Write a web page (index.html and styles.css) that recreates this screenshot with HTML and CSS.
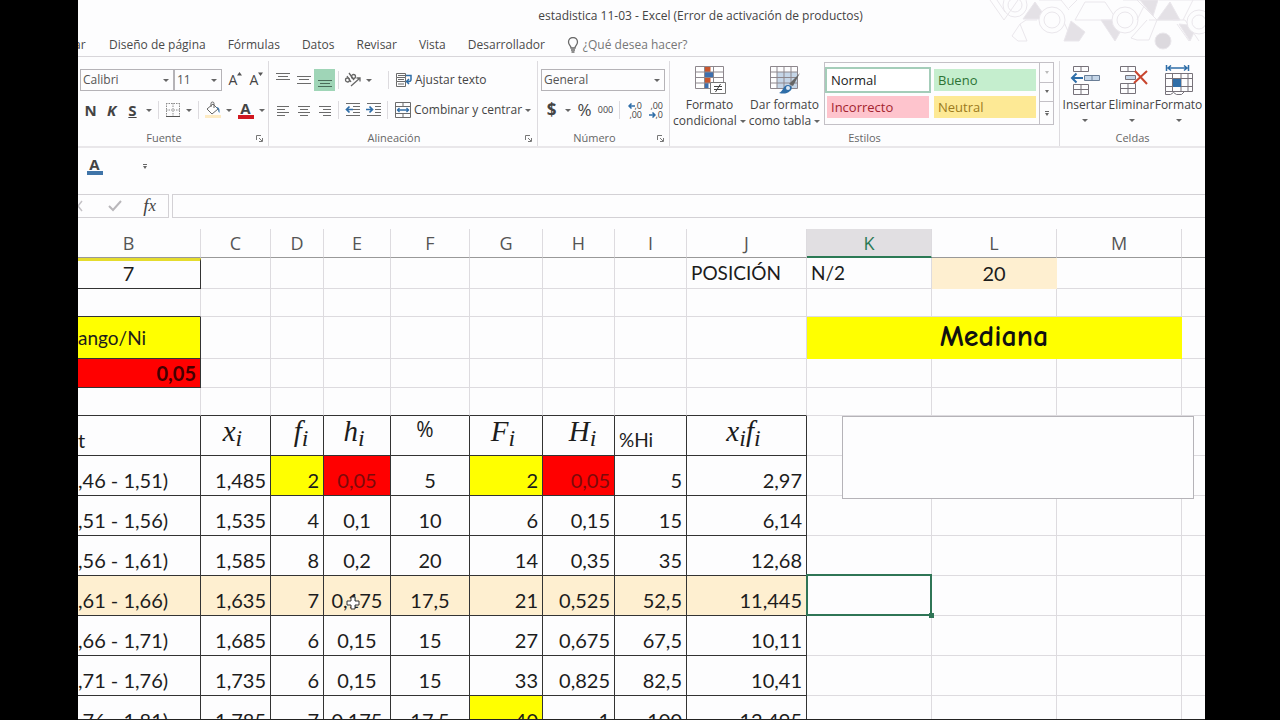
FILE: index.html
```html
<!DOCTYPE html>
<html lang="es">
<head>
<meta charset="utf-8">
<title>estadistica 11-03 - Excel</title>
<link rel="stylesheet" href="styles.css">
</head>
<body>
<div class="app">
  <header class="titlebar">
    <h1 class="title">estadistica 11-03 - Excel (Error de activación de productos)</h1>
    <svg class="pattern" width="220" height="50" viewBox="0 0 220 50" fill="none" stroke="#eae7ec" stroke-width="1">
      <path d="M5 0l14 20L33 0M12 0l8 12"/>
      <circle cx="30" cy="5" r="12"/><circle cx="30" cy="5" r="7"/>
      <path d="M38 19L50 2l12 17z" fill="#e4e1e6"/>
      <path d="M54 0h22l8 10M35 24l6-4h11M35 24l-8 12 6 5h9l-7-17M78 20l8 18"/>
      <circle cx="67" cy="20" r="13" fill="#fdfdfe"/><circle cx="67" cy="20" r="8"/>
      <path d="M86 21l14 11-6 9H79z" fill="#e4e1e6"/>
      <path d="M90 20L100 2h20l12 18H90M84 8l8-8"/>
      <path d="M116 20l14 21 12-21z" fill="#e4e1e6"/>
      <circle cx="140" cy="20" r="13" fill="#fdfdfe"/><circle cx="140" cy="20" r="8"/>
      <path d="M138 0h24l-10 20M152 0l20 20-8 20h-12l-6-2 16-18M164 20h30"/>
      <path d="M155 0h18l-5 16z" fill="#e4e1e6"/>
      <path d="M172 20l13-18 10 18z" fill="#e4e1e6"/>
      <circle cx="178" cy="41" r="8" fill="#dcd9de"/>
      <path d="M188 20h12l14 21M174 0h46M198 20l10-20M192 24l12 17"/>
      <path d="M194 24l11 17 7-15z" fill="#e4e1e6"/>
      <circle cx="214" cy="22" r="12" fill="#fdfdfe"/><circle cx="214" cy="22" r="7"/>
    </svg>
  </header>

  <nav class="tabs">
    <a class="tab tab-cut" href="#">ar</a>
    <a class="tab" href="#">Diseño de página</a>
    <a class="tab" href="#">Fórmulas</a>
    <a class="tab" href="#">Datos</a>
    <a class="tab" href="#">Revisar</a>
    <a class="tab" href="#">Vista</a>
    <a class="tab" href="#">Desarrollador</a>
    <a class="tab tell" href="#">
      <svg width="12" height="16" viewBox="0 0 12 16" fill="none" stroke="#6a6a6a" stroke-width="1.3"><path d="M4 11C4 8.500 1.500 8 1.500 5a4.500 4.500 0 0 1 9 0c0 3-2.500 3.500-2.500 6zM4 13h4M4.500 15h3"/></svg>
      ¿Qué desea hacer?
    </a>
  </nav>

  <section class="ribbon">
    <div class="group g-font">
      <div class="body">
        <div class="line">
          <label class="combo c-font"><select aria-label="Fuente"><option>Calibri</option></select><i class="arr"></i></label>
          <label class="combo c-size"><select aria-label="Tamaño de fuente"><option>11</option></select><i class="arr"></i></label>
          <button class="ib grow" aria-label="Aumentar tamaño de fuente">A<svg width="5" height="4" viewBox="0 0 5 4"><path d="M0 3.500L2.500 0 5 3.500z" fill="#555"/></svg></button>
          <button class="ib grow" aria-label="Disminuir tamaño de fuente">A<svg width="5" height="4" viewBox="0 0 5 4"><path d="M0 .5h5L2.500 4z" fill="#555"/></svg></button>
        </div>
        <div class="line">
          <button class="ib"><b>N</b></button>
          <button class="ib"><b><em>K</em></b></button>
          <button class="ib"><b><u>S</u></b></button>
          <i class="arr"></i><i class="sep"></i>
          <button class="ib" aria-label="Bordes"><svg width="16" height="16" viewBox="0 0 16 16" fill="none" stroke="#8d8d8d"><path d="M1.500 1v13M14.500 1v13M8 1v13M1 1.500h14M1 8h14" stroke-dasharray="1.500 1"/><path d="M1 14.500h14" stroke="#555"/></svg></button>
          <i class="arr"></i><i class="sep"></i>
          <button class="ib" aria-label="Color de relleno"><svg width="18" height="18" viewBox="0 0 18 18" fill="none"><path d="M3 8l6-5 5 5-6 5z" stroke="#666" fill="#fff"/><path d="M7 6V2.500a1.500 1.500 0 0 1 3 0V7" stroke="#666"/><path d="M12 6c3 0 4 2 3.500 6-1-1-1.500-2-1.500-4z" fill="#3d78ad"/><path d="M1 14h16v3H1z" fill="#fdebc4"/></svg></button>
          <i class="arr"></i>
          <button class="ib colorA" aria-label="Color de fuente"><b>A</b></button>
          <i class="arr"></i>
        </div>
      </div>
      <footer class="gl"><span>Fuente</span><svg class="launch" width="7" height="7" viewBox="0 0 7 7" fill="none" stroke="#777"><path d="M.5 5V.5H5M3 3l3 3M6.500 3v3.500H3"/></svg></footer>
    </div>

    <div class="group g-align">
      <div class="body">
        <div class="line">
          <button class="ib" aria-label="Alinear arriba"><svg width="16" height="18" viewBox="0 0 16 18" stroke="#6b6b6b"><path d="M1 2.500h14M3 5.500h10M1 8.500h14"/></svg></button>
          <button class="ib" aria-label="Alinear al medio"><svg width="16" height="18" viewBox="0 0 16 18" stroke="#6b6b6b"><path d="M1 5.500h14M3 8.500h10M1 12.500h14"/></svg></button>
          <button class="ib on" aria-label="Alinear abajo"><svg width="16" height="18" viewBox="0 0 16 18" stroke="#4a6b59"><path d="M1 9.500h14M3 12.500h10M1 15.500h14"/></svg></button>
          <i class="sep"></i>
          <button class="ib" aria-label="Orientación"><svg width="18" height="16" viewBox="0 0 18 16" fill="none" stroke="#666" stroke-width="1.300"><path d="M7 14l9-8M12.500 6H16v3.500"/><circle cx="3.500" cy="8" r="2"/><path d="M3 4l4 6M5 1l5 7"/><circle cx="9.500" cy="4.500" r="2"/></svg></button>
          <i class="arr wide"></i><i class="sep"></i>
          <button class="tb"><svg width="18" height="16" viewBox="0 0 18 16" fill="none" stroke="#6b6b6b"><path d="M1.500 1.500h9v4h-9zM1.500 5.500v4h9v-4M1.500 9.500v5h9v-5M3 3.500h10M3 7.500h6M3 12h6"/><path d="M11 3.500h5v4c0 2-1 2-4 2M14 7l-2.500 2.500L14 12" stroke="#2f6ea8" stroke-width="1.500"/></svg>Ajustar texto</button>
        </div>
        <div class="line">
          <button class="ib" aria-label="Alinear a la izquierda"><svg width="16" height="16" viewBox="0 0 16 16" stroke="#6b6b6b"><path d="M2 4.500h12M2 7.500h8M2 10.500h12M2 13.500h8"/></svg></button>
          <button class="ib" aria-label="Centrar"><svg width="16" height="16" viewBox="0 0 16 16" stroke="#6b6b6b"><path d="M2 4.500h12M4 7.500h8M2 10.500h12M4 13.500h8"/></svg></button>
          <button class="ib" aria-label="Alinear a la derecha"><svg width="16" height="16" viewBox="0 0 16 16" stroke="#6b6b6b"><path d="M2 4.500h12M6 7.500h8M2 10.500h12M6 13.500h8"/></svg></button>
          <i class="sep"></i>
          <button class="ib" aria-label="Disminuir sangría"><svg width="16" height="16" viewBox="0 0 16 16" stroke="#6b6b6b" fill="none"><path d="M1 1.500h14M8 4.500h7M8 7.500h7M8 10.500h7M1 13.500h14"/><path d="M8 7.500H2M4.500 4.500l-3 3 3 3" stroke="#2f6ea8" stroke-width="1.700"/></svg></button>
          <button class="ib" aria-label="Aumentar sangría"><svg width="16" height="16" viewBox="0 0 16 16" stroke="#6b6b6b" fill="none"><path d="M1 1.500h14M9 4.500h6M9 7.500h6M9 10.500h6M1 13.500h14"/><path d="M0 7.500h6M3.500 4.500l3 3-3 3" stroke="#2f6ea8" stroke-width="1.700"/></svg></button>
          <i class="sep"></i>
          <button class="tb"><svg width="18" height="16" viewBox="0 0 18 16" fill="none" stroke="#6b6b6b"><path d="M1.500.5h15v15h-15zM1.500 4.500h15M1.500 11.500h15M9 .5v4M9 11.500v4"/><path d="M3 8h12M5.500 6l-2 2 2 2M12.500 6l2 2-2 2" stroke="#2f6ea8" stroke-width="1.300"/></svg>Combinar y centrar</button>
          <i class="arr"></i>
        </div>
      </div>
      <footer class="gl"><span>Alineación</span><svg class="launch" width="7" height="7" viewBox="0 0 7 7" fill="none" stroke="#777"><path d="M.5 5V.5H5M3 3l3 3M6.500 3v3.500H3"/></svg></footer>
    </div>

    <div class="group g-num">
      <div class="body">
        <div class="line">
          <label class="combo c-num"><select aria-label="Formato de número"><option>General</option></select><i class="arr"></i></label>
        </div>
        <div class="line">
          <button class="ib big"><b>$</b></button>
          <i class="arr"></i>
          <button class="ib big">%</button>
          <button class="ib mil">000</button>
          <i class="sep"></i>
          <button class="ib dec" aria-label="Aumentar decimales"><span><svg width="7" height="6" viewBox="0 0 7 6" fill="none" stroke="#2f6ea8" stroke-width="1.500"><path d="M7 3H1M3.500.5L1 3l2.500 2.500"/></svg>,0</span><span>,00</span></button>
          <button class="ib dec" aria-label="Disminuir decimales"><span>,00</span><span><svg width="7" height="6" viewBox="0 0 7 6" fill="none" stroke="#2f6ea8" stroke-width="1.500"><path d="M0 3h6M3.500.5L6 3 3.500 5.500"/></svg>,0</span></button>
        </div>
      </div>
      <footer class="gl"><span>Número</span><svg class="launch" width="7" height="7" viewBox="0 0 7 7" fill="none" stroke="#777"><path d="M.5 5V.5H5M3 3l3 3M6.500 3v3.500H3"/></svg></footer>
    </div>

    <div class="group g-style">
      <div class="body cols">
        <button class="lb">
          <svg width="32" height="30" viewBox="0 0 32 30" fill="none"><path d="M1.500 1.500h28v22h-28z" fill="#fff"/><path d="M10.500 1h6v6h-6zM10.500 12h6v6h-6z" fill="#c8562e"/><path d="M10.500 7h9v5h-9zM10.500 18h4v6h-4z" fill="#3c6fae"/><path d="M1.500 1.500h28v22h-28zM10.500 1v23M19.500 1v23M1.500 7h28M1.500 12.500h28M1.500 18h28" stroke="#8d878d"/><path d="M16.500 17.500h15v11h-15z" fill="#fff" stroke="#777"/><path d="M20 21.500h8M20 24.500h8M26.500 19l-5 8" stroke="#444"/></svg>
          <span>Formato</span><span>condicional <i class="arr"></i></span>
        </button>
        <button class="lb">
          <svg width="32" height="30" viewBox="0 0 32 30" fill="none"><path d="M8 7h20v17H8z" fill="#c5d6e8"/><path d="M1.500 1.500h27v22h-27zM8 1v23M15 1v23M22 1v23M1.500 7h27M1.500 12.500h27M1.500 18h27" stroke="#8d878d"/><path d="M31 8l-7 13-4-2z" fill="#666"/><path d="M10 28c4-1 4-8 9-8 4 0 5 4 2 6-3 3-7 3-11 2z" fill="#2f6ea8"/><circle cx="19" cy="23" r="2" fill="#dbe8f5"/></svg>
          <span>Dar formato</span><span>como tabla <i class="arr"></i></span>
        </button>
        <div class="gallery">
          <div class="styles">
            <button class="st normal">Normal</button>
            <button class="st good">Bueno</button>
            <button class="st bad">Incorrecto</button>
            <button class="st neutral">Neutral</button>
          </div>
          <div class="spin">
            <button aria-label="Fila anterior"><i class="arr up"></i></button>
            <button aria-label="Fila siguiente"><i class="arr"></i></button>
            <button aria-label="Más estilos"><i class="arr more"></i></button>
          </div>
        </div>
      </div>
      <footer class="gl"><span>Estilos</span></footer>
    </div>

    <div class="group g-cells">
      <div class="body cols">
        <button class="lb">
          <svg width="32" height="30" viewBox="0 0 32 30" fill="none" stroke="#77727a"><path d="M4.500 1.500h15v5h-15zM12 1.500v5M4.500 19.500h15v10h-15zM12 19.500v10M4.500 24.500h15"/><path d="M15.500 10.500h15v5h-15zM23 10.500v5" fill="#c5d6e8" stroke="#6a7e96"/><path d="M14 13H3M7.500 8.500L3 13l4.500 4.500" stroke="#2f6ea8" stroke-width="2"/></svg>
          <span>Insertar</span><i class="arr"></i>
        </button>
        <button class="lb">
          <svg width="32" height="30" viewBox="0 0 32 30" fill="none" stroke="#77727a"><path d="M4.500 1.500h15v5h-15zM12 1.500v5M4.500 18.500h15v10h-15zM12 18.500v10M4.500 23.500h15"/><path d="M9.500 10.500h10v4h-10z" fill="#c5d6e8"/><path d="M19 6l12 13M31 6L18 18" stroke="#c8452e" stroke-width="2"/></svg>
          <span>Eliminar</span><i class="arr"></i>
        </button>
        <button class="lb">
          <svg width="32" height="30" viewBox="0 0 32 30" fill="none" stroke="#77727a"><path d="M3.500 0v6M25.500 0v6M5 3h19M8 .5L5 3l3 2.500M21 .5L24 3l-3 2.500" stroke="#2f6ea8" stroke-width="1.500"/><path d="M2.500 8.500h27v18h-27zM9.500 8.500v18M18 8.500v18M25 8.500v18M2.500 13.500h27M2.500 21.500h27M2.500 26.500v3h5l3-2 3 2h5l3-3"/><path d="M10 14h8v8h-8z" fill="#2f6ea8" stroke="none"/></svg>
          <span>Formato</span><i class="arr"></i>
        </button>
      </div>
      <footer class="gl"><span>Celdas</span></footer>
    </div>
  </section>

  <div class="quick">
    <button class="ib colorA blue" aria-label="Color de fuente"><b>A</b></button>
    <button class="ib" aria-label="Personalizar barra"><i class="arr more small"></i></button>
  </div>

  <div class="fbar">
    <div class="fbtns">
      <button aria-label="Cancelar"><svg width="8" height="12" viewBox="0 0 8 12" stroke="#c4c2c6" stroke-width="1.500"><path d="M-4 1l8 10M4 1l-8 10"/></svg></button>
      <button aria-label="Introducir"><svg width="14" height="12" viewBox="0 0 14 12" fill="none" stroke="#b9b7bb" stroke-width="2"><path d="M1 6l4 4 8-9"/></svg></button>
      <button class="fx" aria-label="Insertar función">f<small>x</small></button>
    </div>
    <input class="finput" type="text" aria-label="Barra de fórmulas">
  </div>

  <main class="sheet">
    <table>
      <colgroup><col class="wB"><col class="wC"><col class="wD"><col class="wE"><col class="wF"><col class="wG"><col class="wH"><col class="wI"><col class="wJ"><col class="wK"><col class="wK"><col class="wM"><col></colgroup>
      <thead>
        <tr><th class="shift">B</th><th>C</th><th>D</th><th>E</th><th>F</th><th>G</th><th>H</th><th>I</th><th>J</th><th class="act">K</th><th>L</th><th>M</th><th></th></tr>
      </thead>
      <tbody>
        <tr class="r32"><td class="c shift k ytop">7</td><td></td><td></td><td></td><td></td><td></td><td></td><td></td><td class="l">POSICIÓN</td><td class="l">N/2</td><td class="c tan soft">20</td><td></td><td></td></tr>
        <tr class="r28"><td class="kb"></td><td></td><td></td><td></td><td></td><td></td><td></td><td></td><td></td><td></td><td></td><td></td><td></td></tr>
        <tr class="r42"><td class="cut l k yel mid">ango/Ni</td><td></td><td></td><td></td><td></td><td></td><td></td><td></td><td></td><td colspan="3" class="yel mediana">Mediana</td><td></td></tr>
        <tr class="r28"><td class="k red bold">0,05</td><td></td><td></td><td></td><td></td><td></td><td></td><td></td><td></td><td></td><td></td><td></td><td></td></tr>
        <tr class="r28 over"><td></td><td></td><td></td><td></td><td></td><td></td><td></td><td></td><td></td><td></td><td></td><td></td><td></td></tr>
        <tr class="data heads"><td class="cut">t</td><td class="eq">x<sub>i</sub></td><td class="eq mid-eq">f<sub>i</sub></td><td class="eq">h<sub>i</sub></td><td class="c pc">%</td><td class="eq">F<sub>i</sub></td><td class="eq mid-eq">H<sub>i</sub></td><td class="l">%Hi</td><td class="eq">x<sub>i</sub>f<sub>i</sub></td><td></td><td></td><td></td><td></td></tr>
        <tr class="data"><td class="cut">,46 - 1,51)</td><td>1,485</td><td class="yel">2</td><td class="c red">0,05</td><td class="c">5</td><td class="yel">2</td><td class="red">0,05</td><td>5</td><td>2,97</td><td></td><td></td><td></td><td></td></tr>
        <tr class="data"><td class="cut">,51 - 1,56)</td><td>1,535</td><td>4</td><td class="c">0,1</td><td class="c">10</td><td>6</td><td>0,15</td><td>15</td><td>6,14</td><td></td><td></td><td></td><td></td></tr>
        <tr class="data"><td class="cut">,56 - 1,61)</td><td>1,585</td><td>8</td><td class="c">0,2</td><td class="c">20</td><td>14</td><td>0,35</td><td>35</td><td>12,68</td><td></td><td></td><td></td><td></td></tr>
        <tr class="data hl"><td class="cut">,61 - 1,66)</td><td>1,635</td><td>7</td><td class="c">0,175<svg class="cursor" width="14" height="14" viewBox="0 0 14 14"><path d="M5 1h4v4h4v4H9v4H5V9H1V5h4z" fill="#fff" stroke="#333"/></svg></td><td class="c">17,5</td><td>21</td><td>0,525</td><td>52,5</td><td>11,445</td><td class="selected"><i class="handle"></i></td><td></td><td></td><td></td></tr>
        <tr class="data"><td class="cut">,66 - 1,71)</td><td>1,685</td><td>6</td><td class="c">0,15</td><td class="c">15</td><td>27</td><td>0,675</td><td>67,5</td><td>10,11</td><td></td><td></td><td></td><td></td></tr>
        <tr class="data"><td class="cut">,71 - 1,76)</td><td>1,735</td><td>6</td><td class="c">0,15</td><td class="c">15</td><td>33</td><td>0,825</td><td>82,5</td><td>10,41</td><td></td><td></td><td></td><td></td></tr>
        <tr class="data"><td class="cut">,76 - 1,81)</td><td>1,785</td><td>7</td><td class="c">0,175</td><td class="c">17,5</td><td class="yel">40</td><td>1</td><td>100</td><td>12,495</td><td></td><td></td><td></td><td></td></tr>
      </tbody>
    </table>
    <div class="shape"></div>
  </main>
</div>
</body>
</html>
```

FILE: styles.css
```css
* { box-sizing: border-box; }
body {
  margin: 0;
  background: #000;
  color: #444;
  font: 12px/16px "Open Sans", "Noto Sans", sans-serif;
}
.app {
  display: flex;
  flex-direction: column;
  height: 100vh;
  margin: 0 75px 0 78px;
  overflow: hidden;
  background: #fdfdfe;
  border-bottom: 1px solid #222;
}
button {
  display: flex;
  align-items: center;
  justify-content: center;
  padding: 0;
  border: 0;
  background: none;
  color: inherit;
  font: inherit;
}
svg { flex: none; }

/* title bar */
.titlebar { position: relative; flex: none; height: 33px; padding: 8px 0 0 118px; text-align: center; }
.title { margin: 0; font-size: 12px; line-height: 16px; font-weight: 400; }
.pattern { position: absolute; top: 0; right: 0; }

/* tabs */
.tabs { display: flex; flex: none; gap: 22px; height: 24px; padding-top: 4px; border-bottom: 1px solid #d8d6da; }
.tab { color: #4a4a4a; text-decoration: none; white-space: nowrap; }
.tab-cut { width: 9px; text-indent: -4px; }
.tell { display: flex; gap: 4px; color: #777; }

/* ribbon */
.ribbon { display: flex; flex: none; height: 91px; border-bottom: 2px solid #e9e7ea; }
.group { display: flex; flex: none; flex-direction: column; justify-content: space-between; margin: 4px 0 0; border-right: 1px solid #dddbdf; }
.g-font { width: 191px; }
.g-align { width: 269px; }
.g-num { width: 132px; }
.g-style { width: 390px; }
.g-cells { flex: 1; border-right: 0; }
.body { padding: 4px 0 0 2px; }
.g-align .body, .g-num .body { padding-left: 3px; }
.line { display: flex; align-items: center; height: 30px; }
.gl { display: flex; align-items: center; justify-content: center; position: relative; height: 16px; color: #666; font-size: 11px; padding-right: 18px; }
.g-style .gl, .g-cells .gl { padding-right: 0; }
.launch { position: absolute; right: 5px; }
.ib { flex: none; width: 21px; height: 22px; font-size: 15px; }
.grow { font-size: 14px; }
.grow svg { align-self: flex-start; margin-top: 3px; }
.combo + .grow { margin-left: 3px; }
.on { background: #9fd5b7; }
.arr { flex: none; display: inline-block; border: 3px solid transparent; border-top-color: #666; border-bottom: 0; vertical-align: middle; }
.line > .arr { margin: 0 3px; }
.line > .arr.wide { margin-right: 13px; }
.sep { flex: none; width: 1px; height: 18px; margin: 0 3px; background: #dddbdf; }
.combo { display: flex; align-items: center; position: relative; height: 22px; border: 1px solid #b5b3b7; }
.combo .arr { position: absolute; right: 4px; }
.combo select { width: 100%; height: 20px; padding: 0 2px; border: 0; background: none; color: #555; font: inherit; appearance: none; }
.c-font { width: 94px; }
.c-size { width: 48px; }
.c-num { width: 124px; }
.tb { gap: 2px; margin-left: 3px; white-space: nowrap; }
.colorA { flex-direction: column; line-height: 14px; }
.colorA::after { content: ""; width: 16px; height: 4px; background: #d01820; }
.colorA.blue::after { background: #3f74a8; }
.big { font-size: 17px; }
.mil { font-size: 9px; }
.dec { flex-direction: column; align-items: flex-end; padding-right: 2px; font-size: 9px; line-height: 9px; }
.cols { display: flex; }
.lb { flex-direction: column; justify-content: flex-start; flex: none; width: 75px; line-height: 16px; white-space: nowrap; }
.lb svg { margin-bottom: 2px; }
.g-cells .body { padding-left: 1px; }
.g-cells .lb { width: 47px; }
.g-cells .lb .arr { margin-top: 6px; }
.gallery { display: flex; flex: none; width: 230px; height: 63px; margin: -3px 0 0 2px; border: 1px solid #c3c0c6; }
.styles { display: grid; flex: 1; grid-template-columns: 1fr 1fr; grid-template-rows: 22px 22px; gap: 5px; padding: 6px 3px 0 2px; }
.st { justify-content: flex-start; padding-left: 4px; font-size: 13px; }
.normal { color: #222; outline: 2px solid #a4cdb9; background: #fff; }
.good { background: #c5eece; color: #2c7334; }
.bad { background: #fec4cd; color: #a3242f; }
.neutral { background: #fde995; color: #9c7a1c; }
.spin { display: grid; width: 14px; border-left: 1px solid #c3c0c6; }
.spin button + button { border-top: 1px solid #c3c0c6; }
.spin .arr { border-width: 3px 2px 0; }
.arr.up { border-top-color: #bbb; }
.arr.more { position: relative; margin-top: 3px; }
.arr.more::before { content: ""; position: absolute; left: -2px; top: -5px; width: 4px; height: 1px; background: #666; }
.arr.small { border-width: 3px 2px 0; }

/* quick access and formula bar */
.quick { display: flex; flex: none; gap: 29px; height: 46px; padding: 7px 0 0 6px; }
.fbar { display: flex; flex: none; gap: 3px; height: 24px; margin-bottom: 11px; }
.fbtns { display: flex; align-items: center; justify-content: space-between; width: 91px; padding-right: 12px; border: 1px solid #d3d1d5; border-left: 0; }
.fx { font: italic 19px/20px "Liberation Serif", serif; }
.fx small { font-size: 17px; }
.finput { flex: 1; min-width: 0; border: 1px solid #d3d1d5; border-right: 0; background: none; font: inherit; }

/* sheet */
.sheet { position: relative; flex: 1; min-height: 0; overflow: hidden; }
table { width: 100%; table-layout: fixed; border-spacing: 0; color: #1c1c1c; font: 20px/24px Lato, "Open Sans", sans-serif; }
.wB { width: 123px; }
.wC { width: 70px; }
.wD { width: 53px; }
.wE { width: 67px; }
.wF { width: 79px; }
.wG { width: 73px; }
.wH, .wI { width: 72px; }
.wJ { width: 120px; }
.wK { width: 125px; }
.wM { width: 125px; }
th { height: 29px; padding: 1px 0; border-right: 1px solid #dddbdf; border-bottom: 1px solid #999; color: #555; font: 18px/24px "Open Sans", sans-serif; }
.act { background: #e1dfe2; color: #2b7a55; border-bottom: 2px solid #2b7a55; }
td { position: relative; padding: 0 4px 2px; border-right: 1px solid #dddbdf; border-bottom: 1px solid #dddbdf; text-align: right; vertical-align: bottom; white-space: nowrap; }
th:last-child, td:last-child { border-right: 0; }
.r32 td { height: 31px; padding-bottom: 3px; }
.r28 td { height: 28px; }
.r42 td { height: 42px; }
.r28 td.bold { height: 29px; }
.data td { height: 40px; padding-bottom: 3px; }
td.l { text-align: left; font-size: 19px; }
td.c { text-align: center; }
th.shift, td.shift { padding-right: 21px; padding-left: 0; }
td.cut { padding-left: 0; text-align: left; }
td.k { border-right-color: #333; border-bottom-color: #333; }
td.kb { border-bottom-color: #333; }
.ytop { border-top: 3px solid #e5dc2e; }
.yel { background: #ff0; }
.red { background: #f00; color: #7c0a0a; }
.tan { background: #feefd0; }
.soft { border-color: #feefd0; }
td.mid { vertical-align: middle; padding-bottom: 0; }
td.bold { font-weight: 700; color: #400; }
td.mediana { border-color: #ff0; color: #111; text-align: center; vertical-align: middle; font: 700 30px/30px "Comic Sans MS", "Comic Neue", "Open Sans", sans-serif; }
.over td:nth-child(-n+9), .data td:nth-child(-n+9) { border-bottom-color: #333; }
.data td:nth-child(-n+9) { border-right-color: #333; }
.hl td:nth-child(-n+9) { background: #feefd0; }
.data td.eq { padding: 0 6px 9px 0; text-align: center; vertical-align: middle; font: italic 29px/30px "Liberation Serif", serif; }
.data td.mid-eq { padding-left: 14px; }
.eq sub { font-size: 24px; line-height: 0; vertical-align: -5px; }
.data td.pc { padding: 0 10px 0 0; vertical-align: top; font: 21px/26px "Open Sans", sans-serif; }
.selected::after { content: ""; position: absolute; inset: -2px -1px -1px -1px; border: 2px solid #2f7556; }
.handle { position: absolute; right: -3px; bottom: -3px; z-index: 1; width: 5px; height: 5px; background: #2f7556; }
.cursor { position: absolute; left: 22px; top: 20px; }
.shape { position: absolute; top: 187px; right: 11px; width: 352px; height: 83px; border: 1px solid #b5b3b8; background: #fdfdfe; }
```
